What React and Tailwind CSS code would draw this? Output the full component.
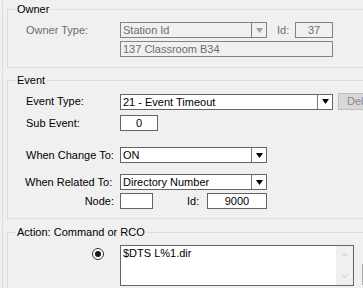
import React from 'react';
import { ChevronUp, ChevronDown } from 'lucide-react';

const Arrow = ({ disabled }) => (
  <div className="w-[15px] h-full border-l border-[#7a7a7a] flex items-center justify-center">
    <svg width="7" height="5" viewBox="0 0 7 5">
      <polygon points="0,0 7,0 3.5,5" fill={disabled ? '#a0a0a0' : '#000'} />
    </svg>
  </div>
);

const Select = ({ className, value, disabled }) => (
  <div
    className={`flex h-[16px] border ${className} ${
      disabled ? 'border-[#838383] bg-[#f0f0f0] text-[#6d6d6d]' : 'border-[#646464] bg-white text-black'
    }`}
  >
    <div className="flex-1 pl-[2px] leading-[14px] whitespace-nowrap overflow-hidden">{value}</div>
    <Arrow disabled={disabled} />
  </div>
);

const Box = ({ className, value, disabled, center }) => (
  <div
    className={`h-[16px] border leading-[14px] whitespace-nowrap overflow-hidden ${className} ${
      center ? 'text-center' : 'pl-[2px]'
    } ${disabled ? 'border-[#838383] bg-[#f0f0f0] text-[#6d6d6d]' : 'border-[#646464] bg-white text-black'}`}
  >
    {value}
  </div>
);

const Group = ({ title, className, children }) => (
  <fieldset className={`border border-r-0 border-[#dcdcdc] w-[400px] p-0 ${className}`}>
    <legend className="ml-[7px] px-[2px] leading-[13px]">{title}</legend>
    {children}
  </fieldset>
);

export default function App() {
  return (
    <div className="w-[363px] h-[288px] overflow-hidden bg-[#f0f0f0] text-[11px] leading-[13px] text-black font-['Liberation_Sans',Arial,sans-serif]">
      <div className="ml-[2px] h-full border-l border-[#dcdcdc] pl-[4px] pt-[3px]">
        {/* Owner */}
        <Group title="Owner" className="pb-[10px]">
          <div className="flex items-center mt-[6px]">
            <span className="ml-[18px] w-[94px] text-[#6d6d6d]">Owner Type:</span>
            <Select className="w-[147px]" value="Station Id" disabled />
            <span className="ml-[10px] w-[18px] text-[#6d6d6d]">Id:</span>
            <Box className="w-[38px]" value="37" disabled center />
          </div>
          <div className="flex mt-[3px]">
            <Box className="ml-[112px] w-[213px]" value="137 Classroom B34" disabled />
          </div>
        </Group>

        {/* Event */}
        <Group title="Event" className="mt-[6px] pb-[9px]">
          <div className="flex items-center mt-[6px]">
            <span className="ml-[18px] w-[94px]">Event Type:</span>
            <Select className="w-[213px]" value="21 - Event Timeout" />
            <div className="ml-[5px] w-[40px] h-[17px] border border-[#bfbfbf] bg-[#d8d8d8] text-[#8a8a8a] pl-[8px] leading-[15px]">
              Delete
            </div>
          </div>
          <div className="flex items-center mt-[5px]">
            <span className="ml-[18px] w-[94px]">Sub Event:</span>
            <Box className="w-[38px] h-[15px]" value="0" center />
          </div>
          <div className="flex items-center mt-[16px]">
            <span className="ml-[18px] w-[94px]">When Change To:</span>
            <Select className="w-[147px]" value="ON" />
          </div>
          <div className="flex items-center mt-[11px]">
            <span className="ml-[17px] w-[95px]">When Related To:</span>
            <Select className="w-[147px]" value="Directory Number" />
          </div>
          <div className="flex items-center mt-[3px]">
            <span className="ml-[18px] w-[94px] text-right pr-[6px]">Node:</span>
            <Box className="w-[33px]" value="" />
            <span className="ml-[34px] w-[20px]">Id:</span>
            <Box className="w-[60px]" value="9000" center />
          </div>
        </Group>

        {/* Action */}
        <Group title="Action: Command or RCO" className="mt-[7px]">
          <div className="flex items-start mt-[6px]">
            <div className="ml-[84px] mt-[3px] w-[12px] h-[12px] rounded-full border border-[#333] bg-white flex items-center justify-center">
              <div className="w-[6px] h-[6px] rounded-full bg-[#1a1a1a]" />
            </div>
            <div className="ml-[16px] w-[234px] h-[41px] border border-[#646464] bg-white flex">
              <div className="flex-1 pl-[2px] pt-[1px]">$DTS L%1.dir</div>
              <div className="w-[17px] bg-[#f0f0f0] flex flex-col items-center justify-between py-[4px]">
                <ChevronUp size={10} color="#bdbdbd" strokeWidth={2} />
                <ChevronDown size={10} color="#bdbdbd" strokeWidth={2} />
              </div>
            </div>
            <div className="ml-[8px] mt-[19px] w-[30px] h-[21px] border border-[#adadad] bg-[#e1e1e1]" />
          </div>
          <div className="ml-[246px] mt-[3px] w-[58px] h-[10px] border border-[#adadad] bg-[#e1e1e1]" />
        </Group>
      </div>
    </div>
  );
}
